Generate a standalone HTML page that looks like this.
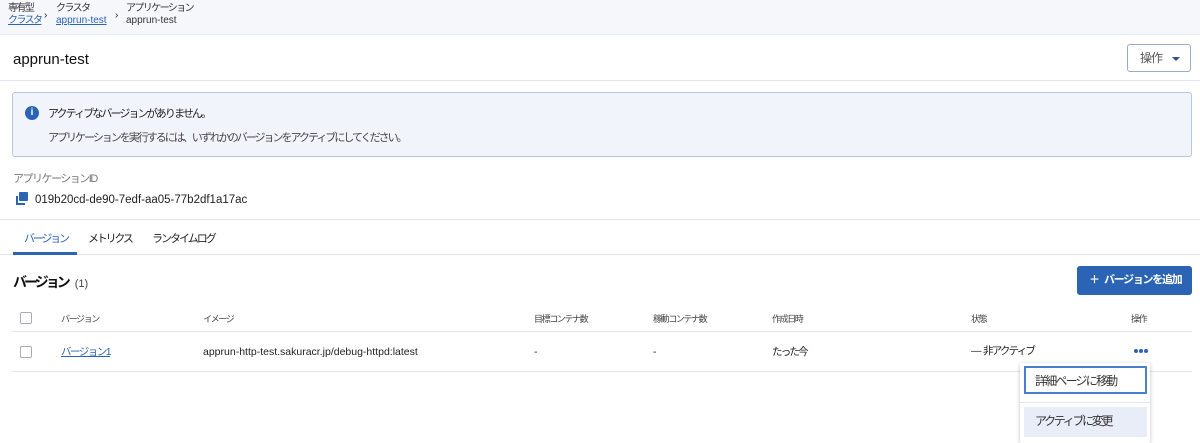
<!DOCTYPE html>
<html><head><meta charset="utf-8"><style>
*{box-sizing:border-box;margin:0;padding:0}
body{width:1200px;height:441px;overflow:hidden;background:#fff;font-family:"Liberation Sans","Noto Sans CJK JP",sans-serif;color:#222;position:relative}
.a{position:absolute;white-space:nowrap;line-height:1.2}
.bc{left:0;top:0;width:1200px;height:35px;background:#f6f7fb;border-bottom:1px solid #e8eaef}
.s{font-size:10px;color:#333;letter-spacing:-1.6px}
.hr{height:1px;background:#e3e5ea;left:0;width:1200px}
.th{font-size:9px;color:#444;letter-spacing:-1.4px}
.td{font-size:10.5px;color:#222}
.lnk{color:#2b63b5 !important;text-decoration:underline}
.cb{width:12px;height:12px;border:1px solid #aab;border-radius:2px;background:#fff}
.dot{position:absolute;width:4px;height:4px;border-radius:50%;background:#2b63b5;top:349px}
</style></head><body>
<div class="a bc"></div>
<div class="a s" style="left:8px;top:3px">専有型</div>
<div class="a s lnk" style="left:8px;top:15px">クラスタ</div>
<div class="a" style="left:44px;top:10px;font-size:10px">›</div>
<div class="a s" style="left:56px;top:3px">クラスタ</div>
<div class="a s lnk" style="left:56px;top:15px;letter-spacing:0">apprun-test</div>
<div class="a" style="left:115px;top:10px;font-size:10px">›</div>
<div class="a s" style="left:126px;top:3px">アプリケーション</div>
<div class="a s" style="left:126px;top:15px;letter-spacing:0">apprun-test</div>
<div class="a" style="left:13px;top:51px;font-size:15px;color:#111">apprun-test</div>
<div class="a" style="left:1127px;top:44px;width:64px;height:28px;border:1px solid #9aaccc;border-radius:3px;font-size:12px;color:#555;padding:6px 0 0 12px;letter-spacing:-1px;line-height:1.2">操作 <span style="position:absolute;left:44px;top:12px;width:0;height:0;border-left:4px solid transparent;border-right:4px solid transparent;border-top:4px solid #2b4e8c"></span></div>
<div class="a hr" style="top:80px"></div>
<div class="a" style="left:12px;top:92px;width:1180px;height:65px;background:#f1f5fb;border:1px solid #b9c7dc;border-radius:3px"></div>
<div class="a" style="left:25px;top:106px;width:14px;height:14px;border-radius:50%;background:#2b63b5;color:#fff;font-size:10px;font-weight:bold;text-align:center;line-height:14px">i</div>
<div class="a" style="left:48px;top:108px;font-size:11px;color:#222;letter-spacing:-1.9px">アクティブなバージョンがありません。</div>
<div class="a" style="left:48px;top:132px;font-size:11px;color:#444;letter-spacing:-2px">アプリケーションを実行するには、いずれかのバージョンをアクティブにしてください。</div>
<div class="a" style="left:13px;top:173px;font-size:11px;color:#777;letter-spacing:-1.5px">アプリケーションID</div>
<div class="a" style="left:16px;top:196px;width:9px;height:9px;border:2px solid #2b63b5;border-top:none;border-right:none"></div>
<div class="a" style="left:19px;top:192px;width:9px;height:9px;background:#2b63b5;border-radius:1px"></div>
<div class="a" style="left:35px;top:194px;font-size:11.5px;color:#222">019b20cd-de90-7edf-aa05-77b2df1a17ac</div>
<div class="a hr" style="top:219px"></div>
<div class="a" style="left:24px;top:233px;font-size:11px;color:#2b63b5;letter-spacing:-2.2px">バージョン</div>
<div class="a" style="left:88px;top:233px;font-size:11px;color:#222;letter-spacing:-2.2px">メトリクス</div>
<div class="a" style="left:152px;top:233px;font-size:11px;color:#222;letter-spacing:-2px">ランタイムログ</div>
<div class="a hr" style="top:254px"></div>
<div class="a" style="left:13px;top:252px;width:64px;height:3px;background:#2b63b5"></div>
<div class="a" style="left:13px;top:274px;font-size:14px;color:#111;font-weight:bold;letter-spacing:-3px">バージョン <span style="font-size:11px;font-weight:normal;color:#444;letter-spacing:0">&nbsp;&nbsp;(1)</span></div>
<div class="a" style="left:1077px;top:266px;width:115px;height:29px;background:#2b63b5;border-radius:3px;color:#fff;font-size:11px;font-weight:bold;padding:8px 0 0 12px;letter-spacing:-1.3px">＋&nbsp;&nbsp; バージョンを追加</div>
<div class="a cb" style="left:20px;top:312px"></div>
<div class="a th" style="left:61px;top:314px">バージョン</div>
<div class="a th" style="left:203px;top:314px">イメージ</div>
<div class="a th" style="left:534px;top:314px">目標コンテナ数</div>
<div class="a th" style="left:653px;top:314px">稼動コンテナ数</div>
<div class="a th" style="left:772px;top:314px">作成日時</div>
<div class="a th" style="left:971px;top:314px">状態</div>
<div class="a th" style="left:1131px;top:314px">操作</div>
<div class="a" style="left:12px;top:331px;width:1180px;height:1px;background:#e3e5ea"></div>
<div class="a cb" style="left:20px;top:346px"></div>
<div class="a td lnk" style="left:61px;top:346px;letter-spacing:-1.5px">バージョン1</div>
<div class="a td" style="left:203px;top:346px">apprun-http-test.sakuracr.jp/debug-httpd:latest</div>
<div class="a td" style="left:534px;top:346px">-</div>
<div class="a td" style="left:653px;top:346px">-</div>
<div class="a td" style="left:772px;top:346px;letter-spacing:-1.8px">たった今</div>
<div class="a td" style="left:971px;top:345px;letter-spacing:-1.8px">— &nbsp;&nbsp;非アクティブ</div>
<div class="dot" style="left:1134px"></div><div class="dot" style="left:1139px"></div><div class="dot" style="left:1144px"></div>
<div class="a" style="left:12px;top:371px;width:1180px;height:1px;background:#e3e5ea"></div>
<div class="a" style="left:1020px;top:363px;width:130px;height:80px;background:#fff;box-shadow:0 1px 4px rgba(0,0,0,.25);border-radius:2px"></div>
<div class="a" style="left:1024px;top:366px;width:123px;height:28px;border:2px solid #4a7fd0;font-size:12px;color:#333;padding:6px 0 0 9px;letter-spacing:-1.8px">詳細ページに移動</div>
<div class="a" style="left:1020px;top:402px;width:130px;height:1px;background:#e3e5ea"></div>
<div class="a" style="left:1024px;top:407px;width:123px;height:30px;background:#e9edf7;font-size:12px;color:#333;padding:7px 0 0 11px;letter-spacing:-2.3px">アクティブに変更</div>
</body></html>
